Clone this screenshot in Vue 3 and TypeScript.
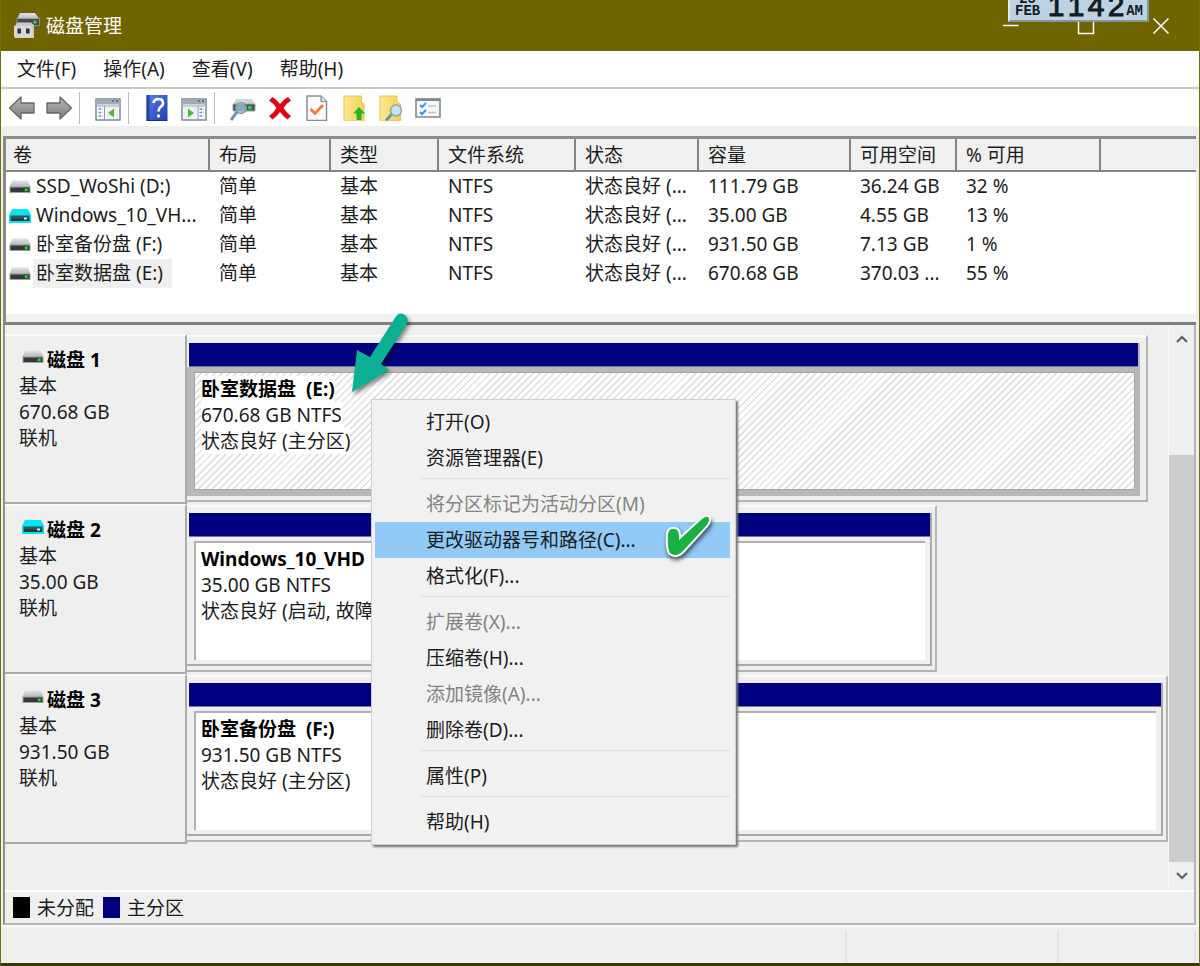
<script setup lang="ts">
import { computed, ref } from 'vue'

interface Volume {
  name: string
  layout: string
  type: string
  fs: string
  status: string
  capacity: string
  free: string
  percent: string
  virtual?: boolean
}

interface Disk {
  name: string
  size: string
  label: string
  detail: string
  status: string
  width: number
  virtual?: boolean
  selected?: boolean
}

interface MenuEntry {
  text: string
  disabled?: boolean
  group: number
}

const menus = ['文件(F)', '操作(A)', '查看(V)', '帮助(H)']
const columns = ['卷', '布局', '类型', '文件系统', '状态', '容量', '可用空间', '% 可用', '']

const volumes: Volume[] = [
  { name: 'SSD_WoShi (D:)', layout: '简单', type: '基本', fs: 'NTFS', status: '状态良好 (...', capacity: '111.79 GB', free: '36.24 GB', percent: '32 %' },
  { name: 'Windows_10_VH...', layout: '简单', type: '基本', fs: 'NTFS', status: '状态良好 (...', capacity: '35.00 GB', free: '4.55 GB', percent: '13 %', virtual: true },
  { name: '卧室备份盘 (F:)', layout: '简单', type: '基本', fs: 'NTFS', status: '状态良好 (...', capacity: '931.50 GB', free: '7.13 GB', percent: '1 %' },
  { name: '卧室数据盘 (E:)', layout: '简单', type: '基本', fs: 'NTFS', status: '状态良好 (...', capacity: '670.68 GB', free: '370.03 ...', percent: '55 %' },
]
const selectedVolume = ref(3)

const disks: Disk[] = [
  { name: '磁盘 1', size: '670.68 GB', label: '卧室数据盘  (E:)', detail: '670.68 GB NTFS', status: '状态良好 (主分区)', width: 98, selected: true },
  { name: '磁盘 2', size: '35.00 GB', label: 'Windows_10_VHD', detail: '35.00 GB NTFS', status: '状态良好 (启动, 故障', width: 76.5, virtual: true },
  { name: '磁盘 3', size: '931.50 GB', label: '卧室备份盘  (F:)', detail: '931.50 GB NTFS', status: '状态良好 (主分区)', width: 100 },
]

const entries: MenuEntry[] = [
  { text: '打开(O)', group: 0 },
  { text: '资源管理器(E)', group: 0 },
  { text: '将分区标记为活动分区(M)', group: 1, disabled: true },
  { text: '更改驱动器号和路径(C)...', group: 1 },
  { text: '格式化(F)...', group: 1 },
  { text: '扩展卷(X)...', group: 2, disabled: true },
  { text: '压缩卷(H)...', group: 2 },
  { text: '添加镜像(A)...', group: 2, disabled: true },
  { text: '删除卷(D)...', group: 2 },
  { text: '属性(P)', group: 3 },
  { text: '帮助(H)', group: 4 },
]
const active = ref('更改驱动器号和路径(C)...')
const groups = computed(() => [0, 1, 2, 3, 4].map((g) => entries.filter((e) => e.group === g)))
</script>

<template>
  <div class="window">
    <svg class="defs" width="0" height="0" aria-hidden="true">
      <defs>
        <linearGradient id="lid" x1="0" y1="0" x2="0" y2="1">
          <stop offset="0" stop-color="#e2e4e6" /><stop offset="1" stop-color="#b4b7ba" />
        </linearGradient>
        <linearGradient id="steel" x1="0" y1="0" x2="0" y2="1">
          <stop offset="0" stop-color="#b5b5b5" /><stop offset="1" stop-color="#7c7c7c" />
        </linearGradient>
        <linearGradient id="book" x1="0" y1="0" x2="1" y2="1">
          <stop offset="0" stop-color="#5b7ee8" /><stop offset="1" stop-color="#1c3fae" />
        </linearGradient>
        <linearGradient id="paper" x1="0" y1="0" x2="1" y2="0">
          <stop offset="0" stop-color="#ffe993" /><stop offset="1" stop-color="#f3cf55" />
        </linearGradient>
        <symbol id="drive" viewBox="0 0 22 14">
          <path d="M3 0.5H19L21.5 7H.5Z" fill="url(#lid)" />
          <path d="M.5 6.5H21.5V13H.5Z" fill="#9b9fa2" />
          <path d="M1.5 7.5H20.5V12H1.5Z" fill="#34383a" />
          <path d="M15 7.5h4.500v4.500h-4.500z" fill="#245c28" /><path d="M16 8.500h2.500v2.500h-2.500z" fill="#29d734" />
        </symbol>
        <symbol id="vdrive" viewBox="0 0 22 14">
          <path d="M3 0H19L22 6V14H0V6Z" fill="#00e6f5" />
          <path d="M1.500 6.500H20.500V12H1.500Z" fill="#315257" />
          <path d="M2 9.500H20V12H2Z" fill="#203c40" /><path d="M15 8.500h3v2h-3z" fill="#dce8e8" />
        </symbol>
      </defs>
    </svg>

    <header class="titlebar">
      <svg class="app-icon" viewBox="0 0 26 25" aria-hidden="true">
        <path d="M6 0H21L25.500 6H3Z" fill="url(#lid)" />
        <path d="M3 5.500H25.500V12.500H3Z" fill="#45494b" stroke="#aeb1b3" stroke-width=".6" />
        <circle cx="21" cy="9" r="1.700" fill="#2bd435" />
        <path d="M1.500 12.500L3 9.500H17L20 12V25H1Q0 24 0 21V13Z" fill="#c9cbcd" />
        <path d="M0 13H18V24.500H1.500L0 22Z" fill="#d7d8d9" />
        <path d="M3.500 15.500h3.500v5h-3.500zM12 15.500h3.500v5H12z" fill="#2d3032" />
      </svg>
      <h1>磁盘管理</h1>
      <div class="caption-buttons">
        <button aria-label="最小化"><svg viewBox="0 0 16 16"><path d="M0 7.500H15.500" /></svg></button>
        <button aria-label="最大化"><svg viewBox="0 0 16 16"><path d="M.5.500h15v15H.5z" /></svg></button>
        <button aria-label="关闭"><svg viewBox="0 0 16 16"><path d="M.5.500l15 15M15.500.500L.5 15.500" /></svg></button>
      </div>
      <div class="clock">
        <div class="date"><span>25</span><span>FEB</span></div>
        <div class="time"><span>1</span><span>1</span><span>4</span><span>2</span></div>
        <span class="meridiem">AM</span>
      </div>
    </header>

    <nav class="menubar">
      <button v-for="m in menus" :key="m">{{ m }}</button>
    </nav>

    <div class="toolbar">
      <button aria-label="后退"><svg viewBox="0 0 28 26"><path d="M1.500 13L13 2V8H26V18H13V24Z" fill="url(#steel)" stroke="#666" stroke-width="1.300" stroke-linejoin="round" /></svg></button>
      <button aria-label="前进"><svg viewBox="0 0 28 26"><path d="M26.500 13L15 2V8H2V18H15V24Z" fill="url(#steel)" stroke="#666" stroke-width="1.300" stroke-linejoin="round" /></svg></button>
      <i></i>
      <button aria-label="控制台树">
        <svg viewBox="0 0 28 26"><path d="M2 4H26V25H2Z" fill="#fff" stroke="#7d8994" stroke-width="1.500" /><path d="M2.500 4.500H25.500V9.500H2.500Z" fill="#a3abb6" /><path d="M18 6h2M22 6h2" stroke="#46608a" stroke-width="1.500" /><path d="M3 10H25.500V12H3Z" fill="#c5ccd3" /><path d="M10.500 11V25" stroke="#8b969f" /><path d="M4.500 14h4M4.500 17.500h4M4.500 21h4" stroke="#5b92d2" stroke-width="1.600" stroke-dasharray="2.500 1" /><path d="M12 12H24.500V24H12Z" fill="#eef1f3" /><path d="M20 13.500V22.500L14 18Z" fill="#52b83b" /></svg>
      </button>
      <i></i>
      <button aria-label="帮助"><svg viewBox="0 0 28 26"><path d="M3.500 0H24.500V26H3.500Z" fill="url(#book)" /><path d="M3.500 0H6.500V26H3.500Z" fill="#23479f" /><path d="M4 25.500H24" stroke="#173078" /><path d="M10.500 8Q11 4 15.500 4Q20 4 20 8Q20 10.500 17.500 12Q15.500 13.500 15.500 16.500" fill="none" stroke="#fff" stroke-width="2.700" /><circle cx="15.500" cy="21" r="1.700" fill="#fff" /></svg></button>
      <button aria-label="操作窗格">
        <svg viewBox="0 0 28 26"><path d="M2 4H26V25H2Z" fill="#fff" stroke="#7d8994" stroke-width="1.500" /><path d="M2.500 4.500H25.500V9.500H2.500Z" fill="#a3abb6" /><path d="M18 6h2M22 6h2" stroke="#46608a" stroke-width="1.500" /><path d="M3 10H25.500V12H3Z" fill="#c5ccd3" /><path d="M18 11V25" stroke="#8b969f" /><path d="M19.500 14h4M19.500 17.500h4M19.500 21h4" stroke="#5b92d2" stroke-width="1.600" stroke-dasharray="2.500 1" /><path d="M3.500 12H17V24H3.500Z" fill="#eef1f3" /><path d="M8 13.500V22.500L14 18Z" fill="#52b83b" /></svg>
      </button>
      <i></i>
      <button aria-label="重新扫描磁盘"><svg viewBox="0 0 28 26"><path d="M7 4H23L26 9H4Z" fill="#d1d4d6" /><path d="M4 9H26V16H4Z" fill="#484d50" stroke="#9ba1a5" /><path d="M19 11h4v3.500h-4z" fill="#26cc34" /><circle cx="12" cy="13" r="5.500" fill="#92bbd0" fill-opacity=".85" stroke="#83929c" stroke-width="1.200" /><path d="M8 17L2 25" stroke="#7295ae" stroke-width="3" /></svg></button>
      <button aria-label="删除"><svg viewBox="0 0 28 26"><path d="M3 5.500L6.500 2Q10 4 14 9Q18 4 22 2L25 5.500Q21 8 17.500 13Q21 18 25 21L21.500 24.500Q17.500 22 14 17Q10.500 22 6.500 24.500L3 21Q7.500 18 10.500 13Q7 8 3 5.500Z" fill="#df0714" /></svg></button>
      <button aria-label="属性"><svg viewBox="0 0 28 26"><path d="M4 1H18L23.500 6.500V25.500H4Z" fill="#f8fafb" stroke="#8a9094" stroke-width="1.500" /><path d="M18 1V6.500H23.500" fill="#dce0e2" stroke="#8a9094" stroke-width="1.200" /><path d="M7.500 14L12 18.500L20 10" fill="none" stroke="#f57937" stroke-width="2.800" /></svg></button>
      <button aria-label="上移"><svg viewBox="0 0 28 26"><path d="M4 1H21.500V7L24 9V26H4Z" fill="url(#paper)" stroke="#e7c457" /><path d="M19 12L25 18.500H21.500V25H16.500V18.500H13Z" fill="#22b527" /></svg></button>
      <button aria-label="查找"><svg viewBox="0 0 28 26"><path d="M3 1H20V7L23.500 9V26H3Z" fill="url(#paper)" stroke="#e7c457" /><path d="M15 19L9 25.500" stroke="#718fa8" stroke-width="3" /><circle cx="19" cy="15.500" r="5.500" fill="#c2e5ef" stroke="#8ba7b4" stroke-width="1.500" /></svg></button>
      <button aria-label="设置"><svg viewBox="0 0 28 26"><path d="M2 4H26V22H2Z" fill="#f7f9fa" stroke="#81888e" stroke-width="1.600" /><path d="M2 3.500H26V6H2Z" fill="#81888e" /><path d="M6 10L8 12L12 8M6 17L8 19L12 15" fill="none" stroke="#3397e5" stroke-width="2" /><path d="M14 11H22M14 17.500H22" stroke="#b9bec2" stroke-width="1.500" /></svg></button>
    </div>

    <section class="volumes">
      <table>
        <colgroup><col v-for="(c, i) in columns" :key="i" :class="'c' + i" /></colgroup>
        <thead>
          <tr><th v-for="c in columns" :key="c">{{ c }}</th></tr>
        </thead>
        <tbody>
          <tr v-for="(v, i) in volumes" :key="v.name" @click="selectedVolume = i">
            <td class="name"><div><svg class="drive"><use :href="v.virtual ? '#vdrive' : '#drive'" /></svg><span :class="{ picked: selectedVolume === i }">{{ v.name }}</span></div></td>
            <td>{{ v.layout }}</td><td>{{ v.type }}</td><td>{{ v.fs }}</td><td>{{ v.status }}</td><td>{{ v.capacity }}</td><td>{{ v.free }}</td><td>{{ v.percent }}</td><td></td>
          </tr>
        </tbody>
      </table>
    </section>

    <main class="graph">
      <div class="viewport">
        <div class="disks">
          <article v-for="d in disks" :key="d.name" class="disk">
            <div class="info">
              <h2><svg class="drive"><use :href="d.virtual ? '#vdrive' : '#drive'" /></svg>{{ d.name }}</h2>
              <p>基本</p><p>{{ d.size }}</p><p>联机</p>
            </div>
            <div class="lane">
              <div class="frame" :class="{ wide: d.selected }" :style="{ width: d.width + '%' }">
                <div class="partition" :class="{ selected: d.selected }">
                  <div class="band"></div>
                  <div class="body">
                    <div class="inner">
                      <strong>{{ d.label }}</strong><span>{{ d.detail }}</span><span>{{ d.status }}</span>
                    </div>
                  </div>
                </div>
              </div>
            </div>
          </article>
        </div>
        <div class="scrollbar">
          <button aria-label="向上滚动"><svg viewBox="0 0 12 8"><path d="M1 7L6 2L11 7" /></svg></button>
          <div class="track"><div class="thumb"></div></div>
          <button aria-label="向下滚动"><svg viewBox="0 0 12 8"><path d="M1 1L6 6L11 1" /></svg></button>
        </div>
      </div>
      <footer class="legend">
        <span class="swatch black"></span>未分配<span class="swatch navy"></span>主分区
      </footer>

      <div class="context" role="menu">
        <div v-for="(g, i) in groups" :key="i" class="group">
          <button v-for="e in g" :key="e.text" role="menuitem" :disabled="e.disabled" :class="{ active: active === e.text }" @mouseenter="active = e.text">{{ e.text }}</button>
        </div>
      </div>
      <svg class="arrow" viewBox="0 0 70 90" aria-hidden="true"><path d="M56 7Q60 0 66 4Q71 8 67 14L42 53L50 59L13 81L18 39L31 46Z" /></svg>
      <svg class="tick" viewBox="0 0 56 56" aria-hidden="true"><path d="M7 22Q8 16 14 17Q19 18 18 28L41 7Q46 3 48 6Q49 9 45 14L22 39Q15 46 9 41Q6 36 7 22Z" /></svg>
    </main>
    <div class="status"><span></span><span></span><span></span></div>
  </div>
</template>

<style>
body { margin: 0; }
</style>

<style scoped>
* { box-sizing: border-box; }
.window {
  display: flex; flex-direction: column; min-height: 100vh;
  border: 1px solid #7a6e0b; border-top: 0; border-bottom: 3px solid #3b3500;
  background: #efefef; color: #1c1c1c;
  font: 19px/26px "Noto Sans", "Noto Sans CJK SC", sans-serif;
}
button { font: inherit; color: inherit; border: 0; padding: 0; margin: 0; background: none; }
h1, h2, p { margin: 0; font-size: inherit; font-weight: 400; }
.defs { position: absolute; }
.titlebar { position: relative; display: flex; align-items: center; height: 51px; padding-left: 13px; background: #706400; color: #fff; overflow: hidden; }
.app-icon { width: 26px; height: 25px; margin-right: 6px; }
.caption-buttons { display: flex; margin-left: auto; margin-right: 1px; }
.caption-buttons button { display: flex; align-items: center; justify-content: center; width: 75px; height: 50px; }
.caption-buttons svg { width: 16px; height: 16px; fill: none; stroke: #fff; stroke-width: 1.5; overflow: visible; }
.clock {
  position: absolute; top: 0; right: 50px; width: 141px; height: 22px; overflow: hidden;
  background: #bdd3e4; border: 2px solid #e3ebf2; border-top: 0; border-right-color: #8794a0; border-bottom-color: #8794a0;
  color: #131a22; font-family: "Liberation Mono", monospace;
}
.date { position: absolute; left: 5px; bottom: 3px; display: flex; flex-direction: column; align-items: center; font-size: 14px; line-height: 12px; font-weight: 700; }
.time { position: absolute; left: 36px; bottom: -1px; display: flex; font-family: "Liberation Sans", sans-serif; font-size: 30px; line-height: 30px; }
.time span { width: 20px; text-align: center; -webkit-text-stroke: 1px #131a22; }
.meridiem { position: absolute; right: 4px; bottom: 3px; font-size: 14px; line-height: 12px; font-weight: 700; }

.menubar { display: flex; gap: 27px; height: 36px; padding: 0 16px; align-items: center; background: #fff; }
.toolbar { display: flex; align-items: center; height: 39px; padding-left: 2px; background: #fff; border-top: 2px solid #cbcbcb; margin-bottom: 10px; }
.toolbar button { display: flex; justify-content: center; align-items: center; width: 37px; height: 34px; }
.toolbar svg { width: 28px; height: 26px; }
.toolbar i { width: 10px; height: 32px; margin-left: 2px; border-left: 1px solid #bcbcbc; }

.volumes { height: 189px; margin: 0 3px 0 2px; border: 3px solid #8a8a8a; border-bottom: 3px solid #808080; border-right-width: 0; background: #fff; box-shadow: inset 0 -8px 0 #f1f1f1; }
table { width: 100%; border-collapse: collapse; table-layout: fixed; }
.c0 { width: 203px; } .c1 { width: 121px; } .c2 { width: 108px; } .c3 { width: 137px; } .c4 { width: 123px; }
.c5 { width: 152px; } .c6 { width: 106px; } .c7 { width: 144px; }
th { height: 32px; padding: 0 0 0 9px; background: #f0f0f0; text-align: left; font-weight: 400; border-right: 2px solid #858585; border-bottom: 2px solid #858585; }
th:first-child { padding-left: 7px; }
th:last-child { border-right: 0; }
td { height: 29px; padding: 0 0 2px 10px; white-space: nowrap; overflow: hidden; }
td.name { padding: 0 0 0 3px; }
.name div { display: flex; align-items: center; }
.name span { height: 29px; line-height: 28px; padding: 0 9px 0 3px; margin-left: 2px; }
.name .picked { background: #efefef; }
.drive { width: 22px; height: 14px; flex: none; }

.graph { position: relative; display: flex; flex: 1; flex-direction: column; margin: 0 3px 0 2px; border-left: 2px solid #8f8f8f; border-right: 2px solid #b5b5b5; border-bottom: 2px solid #b5b5b5; }
.viewport { display: flex; flex: 1; }
.disks { flex: 1; min-width: 0; padding-top: 9px; }
.disk { display: flex; height: 170px; }
.info { width: 182px; flex: none; padding: 11px 0 0 14px; border: 2px solid #fbfbfb; border-left: 0; border-bottom: 2px solid #aaa; border-right: 2px solid #aaa; }
.info h2 { display: flex; align-items: center; padding-left: 3px; font-weight: 700; color: #000; gap: 3px; }
.info h2 .drive { margin-bottom: 6px; }
.lane { flex: 1; min-width: 0; padding: 1px 0; }
.frame { height: 167px; padding: 6px 3px 4px 0; border: 2px solid #fafafa; border-left: 0; border-right-color: #b4b4b4; border-bottom-color: #b4b4b4; }
.frame.wide { padding-right: 6px; }
.partition { display: flex; flex-direction: column; height: 100%; border-right: 2px solid #a9a9a9; border-bottom: 2px solid #a9a9a9; }
.band { height: 24px; margin-left: 2px; background: #000080; border-bottom: 1px solid #777798; }
.body { flex: 1; padding: 4px 5px 4px 7px; }
.inner { display: flex; flex-direction: column; align-items: flex-start; height: 100%; padding: 3px 5px; border-top: 2px solid #b0b0b0; border-left: 2px solid #b0b0b0; background: #fff; overflow: hidden; }
.inner strong, .inner span { white-space: pre; color: #000; }
.inner span { color: #1c1c1c; }
.selected { border-color: #b8b8b8; }
.selected .body { padding: 5px 3px 4px 7px; background: #b8b8b8; }
.selected .inner { padding: 3px 6px; border: 1px solid #a4a4a4; background: repeating-linear-gradient(135deg, #fff 0 3px, #dfdfdf 4px 5px, #fff 5px 5px); }
.selected strong, .selected span { background: #fff; }

.scrollbar { display: flex; flex-direction: column; width: 26px; border-left: 1px solid #fafafa; }
.scrollbar button { height: 28px; }
.scrollbar svg { width: 12px; height: 8px; fill: none; stroke: #5b5b5b; stroke-width: 2; display: block; margin: auto; }
.track { display: flex; flex: 1; flex-direction: column; justify-content: flex-end; }
.thumb { height: 80%; background: #cdcdcd; }
.legend { display: flex; align-items: center; height: 33px; padding-left: 8px; border-top: 2px solid #fff; }
.swatch { width: 17px; height: 21px; margin-right: 7px; }
.black { background: #000; }
.navy { background: #000080; margin-left: 9px; }

.context { position: absolute; left: 366px; top: 74px; width: 365px; padding: 4px 5px 4px 3px; border: 1px solid #d0d0d0; background: #f1f1f1; box-shadow: 2px 2px 2px #777; }
.context button { display: block; width: 100%; height: 36px; padding-left: 51px; text-align: left; white-space: nowrap; }
.context button:disabled { color: #838383; }
.context .active { background: #91c9f7; }
.group + .group { padding-top: 10px; background: linear-gradient(#dedede, #dedede) 46px 2px / 100% 1px no-repeat; }
.arrow { position: absolute; left: 334px; top: -14px; width: 70px; height: 90px; fill: #0ab091; filter: drop-shadow(2px 3px 2px #0007); }
.tick { position: absolute; left: 656px; top: 187px; width: 56px; height: 56px; fill: #1bb043; stroke: #fff; stroke-width: 4; paint-order: stroke; filter: drop-shadow(1px 3px 2px #0009); overflow: visible; }

.status { display: flex; height: 38px; padding: 4px 3px 0 0; border-top: 2px solid #fafafa; }
.status span { border-right: 2px solid #e2e2e2; }
.status span:nth-child(1) { flex: 850; }
.status span:nth-child(2) { flex: 211; }
.status span:nth-child(3) { flex: 136; }
</style>
